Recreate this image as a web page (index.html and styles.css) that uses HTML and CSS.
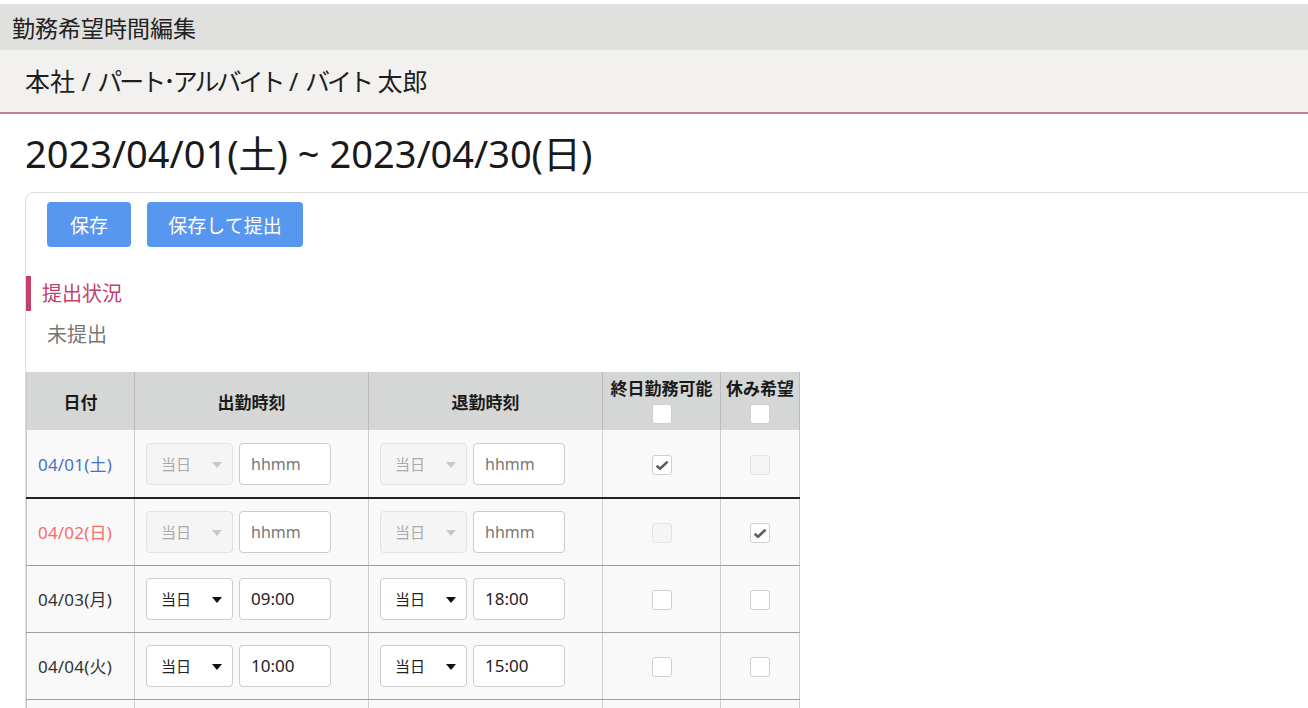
FILE: index.html
```html
<!DOCTYPE html>
<html lang="ja">
<head>
<meta charset="utf-8">
<title>勤務希望時間編集</title>
<link rel="stylesheet" href="styles.css">
</head>
<body>
<div class="page">
  <header class="topbar">勤務希望時間編集</header>
  <div class="subbar">本社 / <span class="kana">パート･アルバイト</span> / <span class="kana">バイト</span> 太郎</div>
  <h1 class="period">2023/04/01(土) ~ 2023/04/30(日)</h1>
  <section class="card">
    <div class="actions">
      <button class="btn btn-save">保存</button>
      <button class="btn btn-submit">保存して提出</button>
    </div>
    <h2 class="section-title">提出状況</h2>
    <p class="status">未提出</p>
    <table class="grid">
      <colgroup>
        <col class="c-date"><col class="c-time"><col class="c-time"><col class="c-all"><col class="c-off">
      </colgroup>
      <thead>
        <tr>
          <th>日付</th>
          <th>出勤時刻</th>
          <th>退勤時刻</th>
          <th class="th-check"><div>終日勤務可能</div><span class="cb cb-head"></span></th>
          <th class="th-check"><div>休み希望</div><span class="cb cb-head"></span></th>
        </tr>
      </thead>
      <tbody>
        <tr class="row-sat">
          <td class="date sat">04/01(土)</td>
          <td><div class="pair"><span class="sel disabled">当日<i class="arrow"></i></span><span class="inp ph">hhmm</span></div></td>
          <td><div class="pair"><span class="sel disabled">当日<i class="arrow"></i></span><span class="inp ph">hhmm</span></div></td>
          <td class="chk"><span class="cb checked"><svg viewBox="0 0 14 11" width="14" height="11"><path d="M1.6 5.8 L5 8.8 L12.6 1.6" fill="none" stroke="#5e5e5e" stroke-width="2.6" stroke-linejoin="round"/></svg></span></td>
          <td class="chk"><span class="cb disabled"></span></td>
        </tr>
        <tr>
          <td class="date sun">04/02(日)</td>
          <td><div class="pair"><span class="sel disabled">当日<i class="arrow"></i></span><span class="inp ph">hhmm</span></div></td>
          <td><div class="pair"><span class="sel disabled">当日<i class="arrow"></i></span><span class="inp ph">hhmm</span></div></td>
          <td class="chk"><span class="cb disabled"></span></td>
          <td class="chk"><span class="cb checked"><svg viewBox="0 0 14 11" width="14" height="11"><path d="M1.6 5.8 L5 8.8 L12.6 1.6" fill="none" stroke="#5e5e5e" stroke-width="2.6" stroke-linejoin="round"/></svg></span></td>
        </tr>
        <tr>
          <td class="date">04/03(月)</td>
          <td><div class="pair"><span class="sel">当日<i class="arrow"></i></span><span class="inp">09:00</span></div></td>
          <td><div class="pair"><span class="sel">当日<i class="arrow"></i></span><span class="inp">18:00</span></div></td>
          <td class="chk"><span class="cb"></span></td>
          <td class="chk"><span class="cb"></span></td>
        </tr>
        <tr>
          <td class="date">04/04(火)</td>
          <td><div class="pair"><span class="sel">当日<i class="arrow"></i></span><span class="inp">10:00</span></div></td>
          <td><div class="pair"><span class="sel">当日<i class="arrow"></i></span><span class="inp">15:00</span></div></td>
          <td class="chk"><span class="cb"></span></td>
          <td class="chk"><span class="cb"></span></td>
        </tr>
        <tr class="row-cut">
          <td class="date"></td>
          <td></td>
          <td></td>
          <td class="chk"></td>
          <td class="chk"></td>
        </tr>
      </tbody>
    </table>
  </section>
</div>
</body>
</html>
```

FILE: styles.css
```css
* { box-sizing: border-box; }
html, body { margin: 0; padding: 0; background: #fff; overflow: hidden; }
body {
  font-family: "Noto Sans", "Noto Sans CJK JP", sans-serif;
  color: #222;
}
.page { padding-top: 4px; width: 1308px; height: 708px; overflow: hidden; }

.topbar {
  height: 46px;
  background: #e0e0df;
  padding-left: 12px;
  font-size: 23px;
  line-height: 48px;
  color: #222;
}
.subbar {
  height: 64px;
  background: #f2f1ef;
  border-bottom: 2px solid #c67b9b;
  padding-left: 25px;
  font-size: 25px;
  line-height: 62px;
  color: #1e1e1e;
}
.kana { letter-spacing: -3px; }
.period {
  margin: 0;
  padding: 15px 0 0 25px;
  height: 78px;
  font-size: 38px;
  font-weight: normal;
  line-height: 48px;
  color: #1a1a1a;
}
.card {
  margin-left: 25px;
  width: 1400px;
  height: 600px;
  border: 1px solid #dcdcdc;
  border-radius: 9px 0 0 0;
  padding-top: 9px;
}
.actions {
  display: flex;
  gap: 16px;
  padding-left: 21px;
}
.btn {
  height: 45px;
  border: none;
  border-radius: 4px;
  background: #5797ef;
  color: #fff;
  font-family: inherit;
  font-size: 19px;
  padding: 0;
}
.btn-save { width: 84px; }
.btn-submit { width: 156px; }

.section-title {
  margin: 29px 0 0 0;
  height: 35px;
  border-left: 5px solid #c2406f;
  padding-left: 11px;
  font-size: 20px;
  font-weight: normal;
  line-height: 36px;
  color: #c2406f;
}
.status {
  margin: 10px 0 0 0;
  padding-left: 21px;
  height: 26px;
  font-size: 20px;
  line-height: 28px;
  color: #777;
}
.grid {
  margin-top: 25px;
  border-collapse: collapse;
  table-layout: fixed;
  width: 773px;
  font-size: 17px;
}
.c-date { width: 108px; }
.c-time { width: 234px; }
.c-all { width: 118px; }
.c-off { width: 79px; }
.grid th {
  background: #d5d6d6;
  height: 58px;
  font-weight: bold;
  font-size: 17px;
  color: #1a1a1a;
  border-left: 1px solid #bcbcbc;
  border-right: 1px solid #bcbcbc;
  padding: 0;
  text-align: center;
}
.grid th:first-child { border-left: 1px solid #c8c8c8; }
.grid th.th-check { vertical-align: top; padding-top: 6px; line-height: 22px; }
.grid td {
  background: #f9f9f9;
  height: 67px;
  border: 1px solid #cfcfcf;
  border-top: 1px solid #9e9e9e;
  border-bottom: 1px solid #9e9e9e;
  padding: 0;
  vertical-align: middle;
}
.grid td:first-child { border-left: 1px solid #c8c8c8; }
.grid tr.row-sat td { height: 68px; border-bottom: 2px solid #222; }
.grid tbody tr:first-child td { border-top: none; }
.date { padding-left: 11px !important; font-size: 17px; letter-spacing: 0.2px; color: #333; }
.date.sat { color: #4a72c4; }
.date.sun { color: #f26e6e; }
.pair { display: flex; gap: 6px; padding-left: 11px; }
.sel, .inp {
  height: 42px;
  border: 1px solid #cccccc;
  border-radius: 4px;
  background: #fff;
  display: flex;
  align-items: center;
  font-size: 17px;
  color: #222;
}
.sel { width: 87px; padding-left: 14px; position: relative; font-size: 15px; }
.sel .arrow {
  position: absolute;
  right: 10px;
  top: 18px;
  width: 0; height: 0;
  border-left: 5px solid transparent;
  border-right: 5px solid transparent;
  border-top: 6px solid #111;
}
.sel.disabled { background: #f5f5f5; border-color: #e2e2e2; color: #aaa; }
.sel.disabled .arrow { border-top-color: #c8c8c8; }
.inp { width: 92px; padding-left: 11px; }
.inp.ph { color: #777; font-size: 16px; }
.chk { text-align: center; }
.cb {
  display: inline-flex;
  align-items: center;
  justify-content: center;
  width: 20px;
  height: 20px;
  border: 1px solid #cfcfcf;
  border-radius: 3px;
  background: #fff;
  vertical-align: middle;
}
.cb.cb-head { border-color: #d0d0d0; margin-top: 4px; }
.cb.disabled { background: #f5f5f5; border-color: #e3e3e3; }
.cb svg { display: block; margin-top: 1px; }
```
